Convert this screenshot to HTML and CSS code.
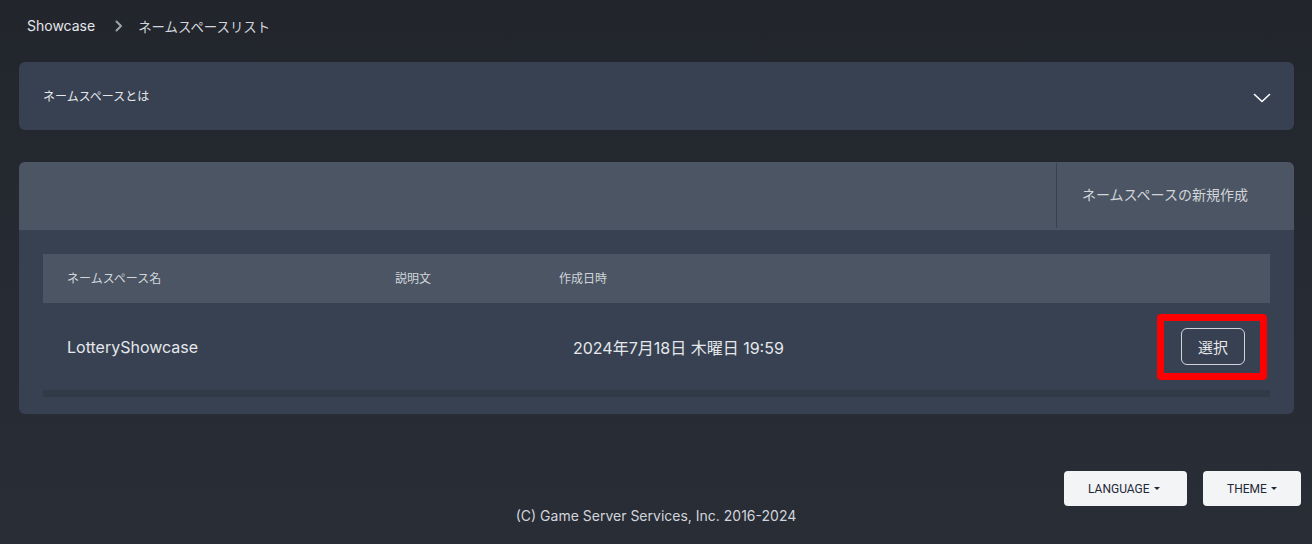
FILE: index.html
```html
<!DOCTYPE html>
<html lang="ja">
<head>
<meta charset="utf-8">
<title>ネームスペースリスト</title>
<link rel="stylesheet" href="styles.css">
</head>
<body>
<div class="page">
  <nav class="breadcrumb">
    <span class="crumb-root">Showcase</span>
    <svg class="crumb-sep" width="8" height="12" viewBox="0 0 8 12"><path d="M1.5 1.5 L6 6 L1.5 10.5" fill="none" stroke="#9ca3af" stroke-width="2" stroke-linecap="round" stroke-linejoin="round"/></svg>
    <span class="crumb-current">ネームスペースリスト</span>
  </nav>

  <section class="accordion">
    <span class="accordion-title">ネームスペースとは</span>
    <svg class="accordion-icon" width="18" height="10" viewBox="0 0 18 10"><path d="M1.5 1.5 L9 8.5 L16.5 1.5" fill="none" stroke="#ffffff" stroke-width="1.6" stroke-linecap="round" stroke-linejoin="round"/></svg>
  </section>

  <section class="card">
    <div class="card-header">
      <div class="card-header-fill"></div>
      <div class="card-action">ネームスペースの新規作成</div>
    </div>
    <div class="card-body">
      <div class="table">
        <div class="thead">
          <div class="th">ネームスペース名</div>
          <div class="th">説明文</div>
          <div class="th">作成日時</div>
          <div class="th"></div>
        </div>
        <div class="tr">
          <div class="td td-name">LotteryShowcase</div>
          <div class="td"></div>
          <div class="td td-date">2024年7月18日 木曜日 19:59</div>
          <div class="td td-action">
            <div class="highlight"><button class="select-btn">選択</button></div>
          </div>
        </div>
        <div class="tfoot"></div>
      </div>
    </div>
  </section>

  <footer class="footer">
    <div class="footer-buttons">
      <button class="menu-btn">LANGUAGE<span class="caret"></span></button>
      <button class="menu-btn">THEME<span class="caret"></span></button>
    </div>
    <div class="copyright">(C) Game Server Services, Inc. 2016-2024</div>
  </footer>
</div>
</body>
</html>
```

FILE: styles.css
```css
* { box-sizing: border-box; }
html, body { margin: 0; height: 100%; }
body {
  background: linear-gradient(180deg, #22252c 0%, #262a32 50%, #292d36 100%);
  font-family: "Inter", "Noto Sans CJK JP", sans-serif;
  color: #e5e7eb;
  overflow: hidden;
}
.page {
  width: 1312px;
  padding: 0 18px 0 19px;
}
.breadcrumb {
  height: 62px;
  display: flex;
  align-items: center;
  padding: 0 0 11px 8px;
  font-size: 14px;
}
.crumb-root { color: #e5e7eb; }
.crumb-sep { margin: 0 15px 0 20px; }
.crumb-current { color: #d1d5db; font-size: 13.4px; }

.accordion {
  height: 68px;
  background: #374151;
  border-radius: 6px;
  display: flex;
  align-items: center;
  justify-content: space-between;
  padding: 0 23px 2px 24px;
}
.accordion-title { font-size: 12px; color: #e5e7eb; }
.accordion-icon { margin-top: 5px; }

.card {
  margin-top: 32px;
  background: #374151;
  border-radius: 6px;
  overflow: hidden;
}
.card-header {
  height: 68px;
  background: #4b5563;
  display: flex;
}
.card-header-fill { flex: 1; }
.card-action {
  width: 238px;
  border-left: 1px solid #374151;
  margin: 1px 0 2px;
  display: flex;
  align-items: center;
  padding: 0 0 3px 25px;
  font-size: 14px;
  color: #d1d5db;
}
.card-body { padding: 24px 24px 17px; }
.table { display: flex; flex-direction: column; }
.thead, .tr {
  display: grid;
  grid-template-columns: 328px 164px 1fr auto;
}
.thead {
  height: 49px;
  background: #4b5563;
  align-items: center;
  padding-bottom: 3px;
}
.th {
  padding-left: 24px;
  font-size: 12px;
  color: #d1d5db;
}
.tr {
  height: 87px;
  align-items: center;
}
.td { padding-left: 24px; font-size: 16px; color: #e5e7eb; }
.td-date { padding-left: 38px; }
.td-action { padding: 1px 3px 0 0; }
.highlight {
  border: 7px solid #ff0000;
  border-radius: 4px;
  padding: 0 15px 1px 17px;
  height: 66px;
  display: flex;
  align-items: center;
}
.select-btn {
  width: 64px;
  height: 37px;
  background: transparent;
  border: 1px solid #d1d5db;
  border-radius: 6px;
  color: #e5e7eb;
  font-family: "Noto Sans CJK JP", sans-serif;
  font-size: 15px;
  padding: 0;
}
.tfoot { height: 7px; background: #313a47; }

.footer { margin-top: 57px; }
.footer-buttons {
  display: flex;
  justify-content: flex-end;
  gap: 16px;
  margin-right: -7px;
}
.menu-btn {
  height: 35px;
  background: #f3f4f6;
  border: none;
  border-radius: 4px;
  font-family: "Roboto", sans-serif;
  font-size: 12px;
  color: #1f2937;
  display: flex;
  align-items: center;
  padding: 0 24px;
}
.menu-btn:first-child { width: 123px; }
.menu-btn:last-child { width: 98px; }
.caret {
  display: inline-block;
  margin-left: 4px;
  border-left: 3px solid transparent;
  border-right: 3px solid transparent;
  border-top: 3px solid #1f2937;
}
.copyright {
  text-align: center;
  font-family: "Inter", sans-serif;
  font-size: 14px;
  color: #d1d5db;
  margin-top: 1px;
  margin-left: -19px;
  margin-right: -18px;
}
```
